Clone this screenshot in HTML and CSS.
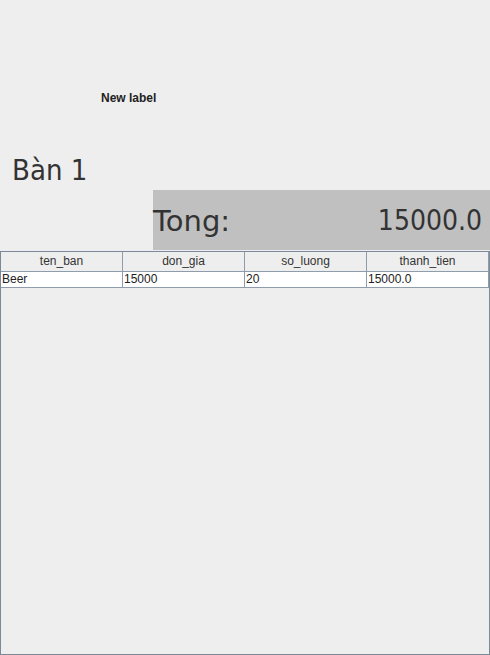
FILE: index.html
```html
<!DOCTYPE html>
<html>
<head>
<meta charset="utf-8">
<link rel="stylesheet" href="styles.css">
</head>
<body>
<div class="frame">
  <div class="newlabel">New label</div>
  <div class="ban">Bàn 1</div>
  <div class="total">
    <span class="tong">Tong:</span>
    <span class="amount">15000.0</span>
  </div>
  <div class="scroll">
    <div class="grid">
      <div class="th">ten_ban</div>
      <div class="th">don_gia</div>
      <div class="th">so_luong</div>
      <div class="th">thanh_tien</div>
      <div class="td">Beer</div>
      <div class="td">15000</div>
      <div class="td">20</div>
      <div class="td">15000.0</div>
    </div>
  </div>
</div>
</body>
</html>
```
FILE: styles.css
```css
html, body {
  margin: 0;
  padding: 0;
  background: #eeeeee;
}
.frame {
  width: 490px;
  height: 655px;
  display: flex;
  flex-direction: column;
  font-family: "Liberation Sans", Arial, sans-serif;
}
.newlabel {
  margin-top: 91px;
  padding-left: 101px;
  font-size: 12px;
  font-weight: bold;
  line-height: 14px;
  color: #222;
}
.ban {
  margin-top: 45px;
  padding-left: 12px;
  font-family: "DejaVu Sans Condensed", "DejaVu Sans", sans-serif;
  font-size: 29px;
  line-height: 40px;
  color: #333;
}
.total {
  margin-left: 153px;
  height: 60px;
  background: #c0c0c0;
  display: flex;
  justify-content: space-between;
  align-items: center;
  padding-right: 8px;
  font-size: 29px;
  color: #333;
}
.total span {
  line-height: 40px;
  margin-top: 3px;
}
.tong {
  font-family: "DejaVu Sans", sans-serif;
}
.amount {
  font-family: "DejaVu Sans Condensed", "DejaVu Sans", sans-serif;
  font-size: 28px;
}
.scroll {
  margin-top: 1px;
  height: 403px;
  border: 1px solid #7a8a9a;
  background: #eeeeee;
}
.grid {
  display: grid;
  grid-template-columns: repeat(4, 122px);
  font-size: 12px;
}
.th {
  height: 19px;
  line-height: 19px;
  text-align: center;
  color: #333;
  background: #eeeeee;
  border-right: 1px solid #8e9cab;
  border-bottom: 1px solid #8e9cab;
  width: 121px;
}
.td {
  height: 15px;
  line-height: 15px;
  padding-left: 1px;
  color: #222;
  background: #ffffff;
  border-right: 1px solid #8e9cab;
  border-bottom: 1px solid #8e9cab;
  width: 120px;
}
```
